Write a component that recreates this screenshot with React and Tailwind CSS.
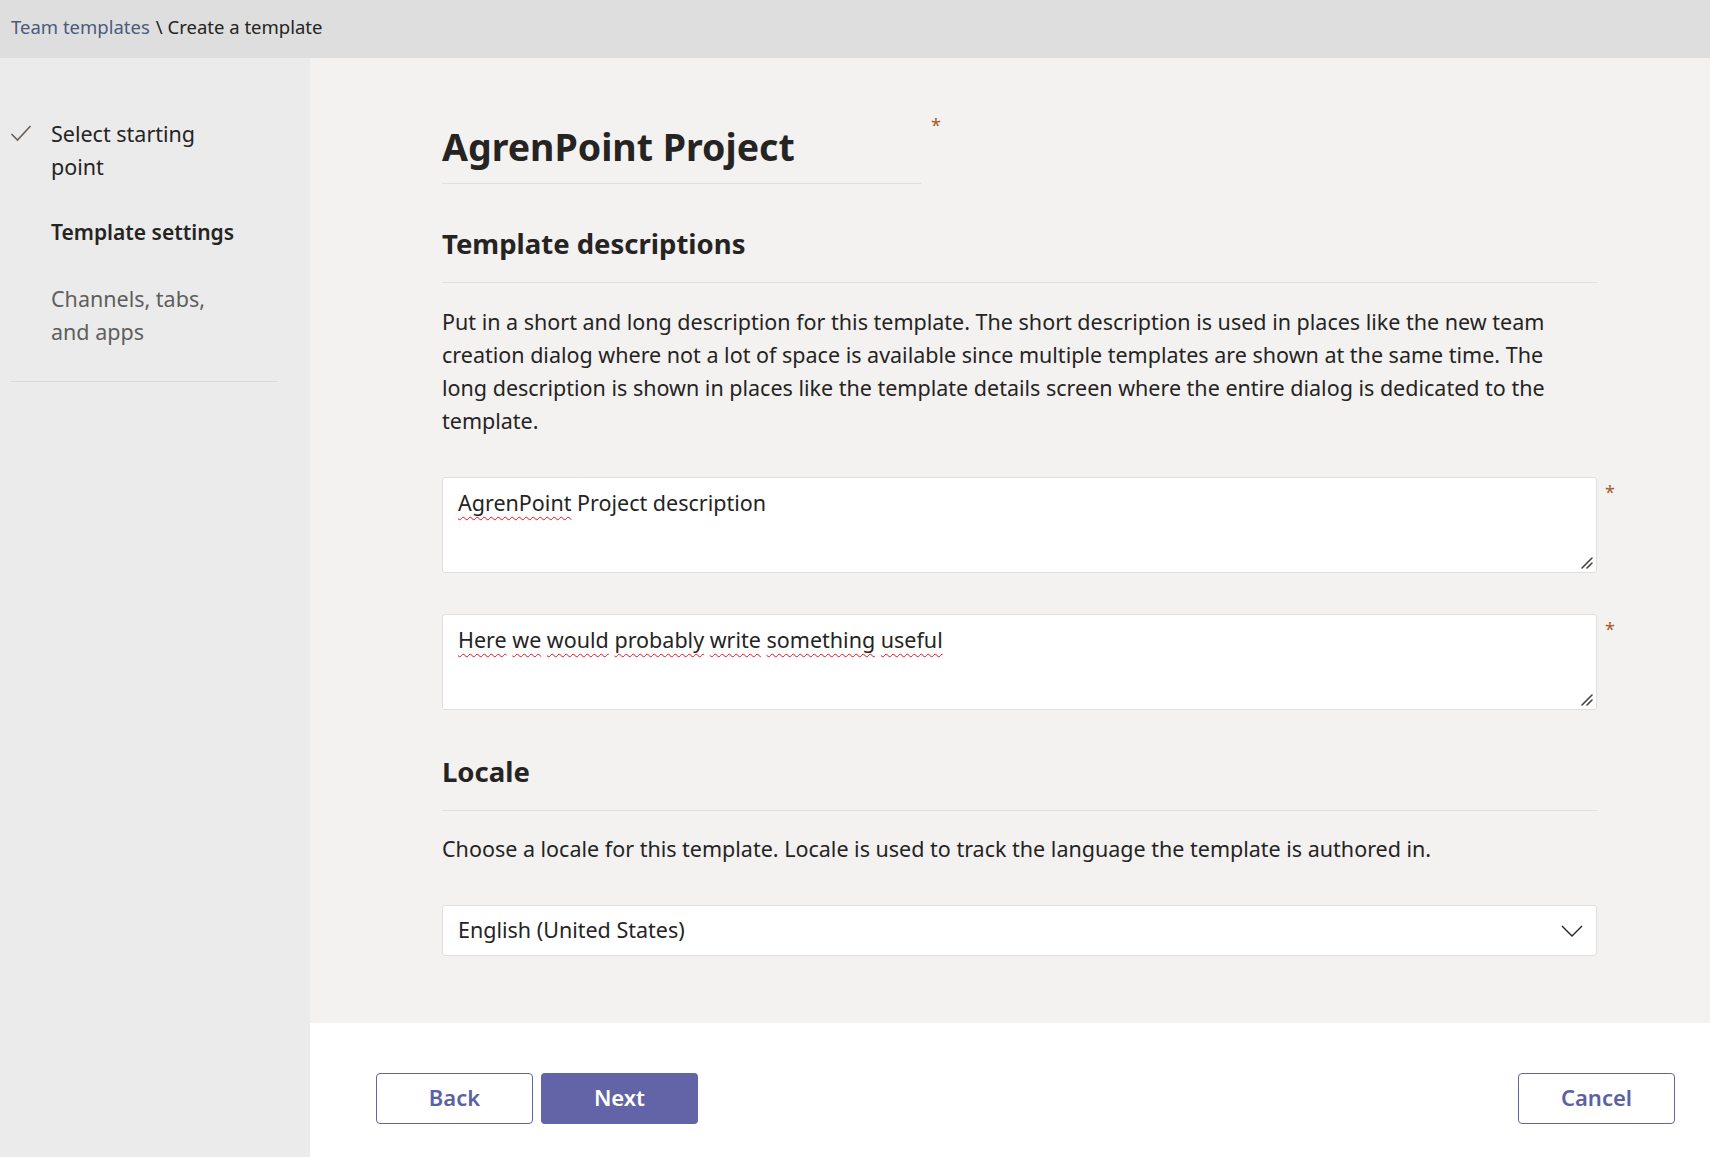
import React from "react";

const FONT = { fontFamily: '"Noto Sans", "Open Sans", sans-serif' };

function Grip() {
  return (
    <svg className="absolute right-[3px] bottom-[3px]" width="12" height="12" viewBox="0 0 12 12">
      <path d="M1 11 L11 1 M6 11 L11 6" stroke="#444" strokeWidth="1.6" strokeLinecap="round" fill="none" />
    </svg>
  );
}

function Squiggle({ children }) {
  return (
    <span className="underline decoration-wavy decoration-[#e81123] decoration-1 underline-offset-[5px]">
      {children}
    </span>
  );
}

function Required({ className = "" }) {
  return <span className={`text-[#a55b2a] text-[18px] leading-none ${className}`}>*</span>;
}

function TextBox({ children }) {
  return (
    <div className="flex items-start">
      <div className="relative w-[1155px] h-[96px] bg-white border border-[#e1dfdd] rounded-[3px] px-[15px] pt-[11px] text-[21.5px] leading-[28px] text-[#252423]">
        {children}
        <Grip />
      </div>
      <Required className="ml-[8px] mt-[6px]" />
    </div>
  );
}

export default function App() {
  return (
    <div className="min-h-screen flex flex-col bg-[#f3f2f1] text-[#252423]" style={FONT}>
      {/* Breadcrumb */}
      <div className="h-[58px] bg-[#dedede] flex items-center pl-[11px] pb-[4px] text-[18.5px]">
        <span className="text-[#4b5a7d]">Team templates</span>
        <span className="ml-[6px]">\ Create a template</span>
      </div>

      <div className="flex flex-1">
        {/* Steps */}
        <div className="w-[310px] bg-[#ebebeb] shrink-0 pt-[59px]">
          <div className="flex text-[21.5px] leading-[33px]">
            <div className="w-[51px] pl-[10px] pt-[7px]">
              <svg width="22" height="18" viewBox="0 0 22 18">
                <path d="M1.5 10 L7.5 16 L20.5 2" stroke="#6b5e55" strokeWidth="1.6" fill="none" />
              </svg>
            </div>
            <div>Select starting<br />point</div>
          </div>
          <div className="pl-[51px] mt-[33px] text-[21px] leading-[33px] font-semibold">Template settings</div>
          <div className="pl-[51px] mt-[33px] text-[21.5px] leading-[33px] text-[#605e5c]">
            Channels, tabs,
            <br />
            and apps
          </div>
          <div className="ml-[11px] w-[266px] mt-[33px] border-t border-[#dcdad8]" />
        </div>

        {/* Main */}
        <div className="flex-1 flex flex-col">
          <div className="flex-1 pl-[132px] pt-[65px]">
            <div className="flex items-start">
              <h1 className="w-[479px] text-[37.5px] leading-[48px] font-bold pb-[12px] border-b border-[#e1dfdd]">
                AgrenPoint Project
              </h1>
              <Required className="ml-[10px] -mt-[7px]" />
            </div>

            <div className="w-[1155px]">
              <h2 className="mt-[42px] text-[27.5px] leading-[36px] font-bold pb-[20px] border-b border-[#e1dfdd]">
                Template descriptions
              </h2>
              <p className="mt-[22px] w-[1130px] text-[21.5px] leading-[33px]">
                Put in a short and long description for this template. The short description is used in places like the new team creation dialog where not a lot of space is available since multiple templates are shown at the same time. The long description is shown in places like the template details screen where the entire dialog is dedicated to the template.
              </p>
            </div>

            <div className="mt-[40px]">
              <TextBox>
                <Squiggle>AgrenPoint</Squiggle> Project description
              </TextBox>
            </div>
            <div className="mt-[41px]">
              <TextBox>
                <Squiggle>Here</Squiggle> <Squiggle>we</Squiggle> <Squiggle>would</Squiggle>{" "}
                <Squiggle>probably</Squiggle> <Squiggle>write</Squiggle> <Squiggle>something</Squiggle>{" "}
                <Squiggle>useful</Squiggle>
              </TextBox>
            </div>

            <div className="w-[1155px]">
              <h2 className="mt-[44px] text-[27.5px] leading-[36px] font-bold pb-[20px] border-b border-[#e1dfdd]">
                Locale
              </h2>
              <p className="mt-[21px] text-[21.5px] leading-[33px]">
                Choose a locale for this template. Locale is used to track the language the template is authored in.
              </p>
              <div className="mt-[40px] h-[51px] bg-white border border-[#e1dfdd] rounded-[3px] flex items-center justify-between pl-[15px] pr-[13px] text-[21.5px]">
                <span>English (United States)</span>
                <svg width="22" height="12" viewBox="0 0 22 12">
                  <path d="M1 1 L11 11 L21 1" stroke="#252423" strokeWidth="1.4" fill="none" />
                </svg>
              </div>
            </div>
          </div>

          {/* Footer */}
          <div className="h-[134px] bg-white flex items-start justify-between pl-[66px] pr-[35px] pt-[50px]">
            <div className="flex gap-[8px]">
              <button className="w-[157px] h-[51px] pb-[3px] border border-[#6264a7] rounded-[4px] bg-white text-[#5b62a3] text-[22px] font-semibold">
                Back
              </button>
              <button className="w-[157px] h-[51px] pb-[3px] rounded-[4px] bg-[#6264a7] text-white text-[22px] font-semibold">
                Next
              </button>
            </div>
            <button className="w-[157px] h-[51px] pb-[3px] border border-[#6264a7] rounded-[4px] bg-white text-[#5b62a3] text-[22px] font-semibold">
              Cancel
            </button>
          </div>
        </div>
      </div>
    </div>
  );
}
